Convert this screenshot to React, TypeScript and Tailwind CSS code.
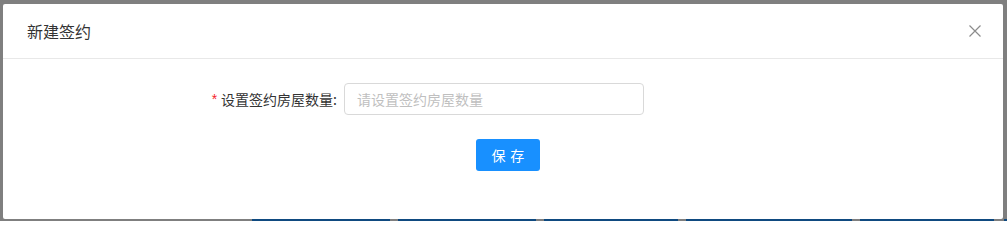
import React from "react";

const font = { fontFamily: '"Noto Sans CJK SC", "Noto Sans", sans-serif' };

export default function App() {
  return (
    <div className="w-[1007px] h-[221px] bg-[#7f7f7f] overflow-hidden flex flex-col" style={font}>
      <div className="pt-[4px] pl-[3px]">
        <div className="w-[1000px] h-[215px] bg-white rounded-[2px] flex flex-col">
          <div className="h-[55px] px-[24px] flex items-center justify-between border-b border-[#e8e8e8]">
            <span className="text-[16px] leading-[22px] text-[#333333]">新建签约</span>
            <button className="w-[12px] h-[12px] mr-[-2px] flex items-center justify-center">
              <svg width="12" height="12" viewBox="0 0 12 12" fill="none">
                <path d="M0.5 0.5 L11.5 11.5 M11.5 0.5 L0.5 11.5" stroke="#8c8c8c" strokeWidth="1.2" />
              </svg>
            </button>
          </div>
          <div className="flex items-center pt-[24px]">
            <div className="w-[341px] flex justify-end items-center pr-[7px] text-[14px] text-[#333333]">
              <span className="text-[#f5222d] mr-[4px] text-[14px] leading-none" style={{ fontFamily: '"Liberation Sans", sans-serif' }}>*</span>
              <span>设置签约房屋数量:</span>
            </div>
            <div className="w-[300px] h-[32px] border border-[#d9d9d9] rounded-[4px] flex items-center px-[12px]">
              <span className="text-[14px] text-[#bfbfbf]">请设置签约房屋数量</span>
            </div>
          </div>
          <div className="pt-[24px] pl-[473px]">
            <button className="w-[64px] h-[32px] bg-[#1890ff] rounded-[3px] text-white text-[14px] flex items-center justify-center">
              <span className="tracking-[0.34em] mr-[-0.34em]">保存</span>
            </button>
          </div>
        </div>
      </div>
      <div className="h-[2px] flex">
        <div className="w-[252px] bg-[#7f7f7f]" />
        <div className="w-[138px] bg-[#0f4a80]" />
        <div className="w-[8px]" />
        <div className="w-[138px] bg-[#0f4a80]" />
        <div className="w-[8px]" />
        <div className="w-[134px] bg-[#0f4a80]" />
        <div className="w-[8px]" />
        <div className="w-[166px] bg-[#0f4a80]" />
        <div className="w-[8px]" />
        <div className="w-[134px] bg-[#0f4a80]" />
        <div className="w-[10px]" />
        <div className="w-[3px] bg-[#0f4a80]" />
      </div>
    </div>
  );
}
